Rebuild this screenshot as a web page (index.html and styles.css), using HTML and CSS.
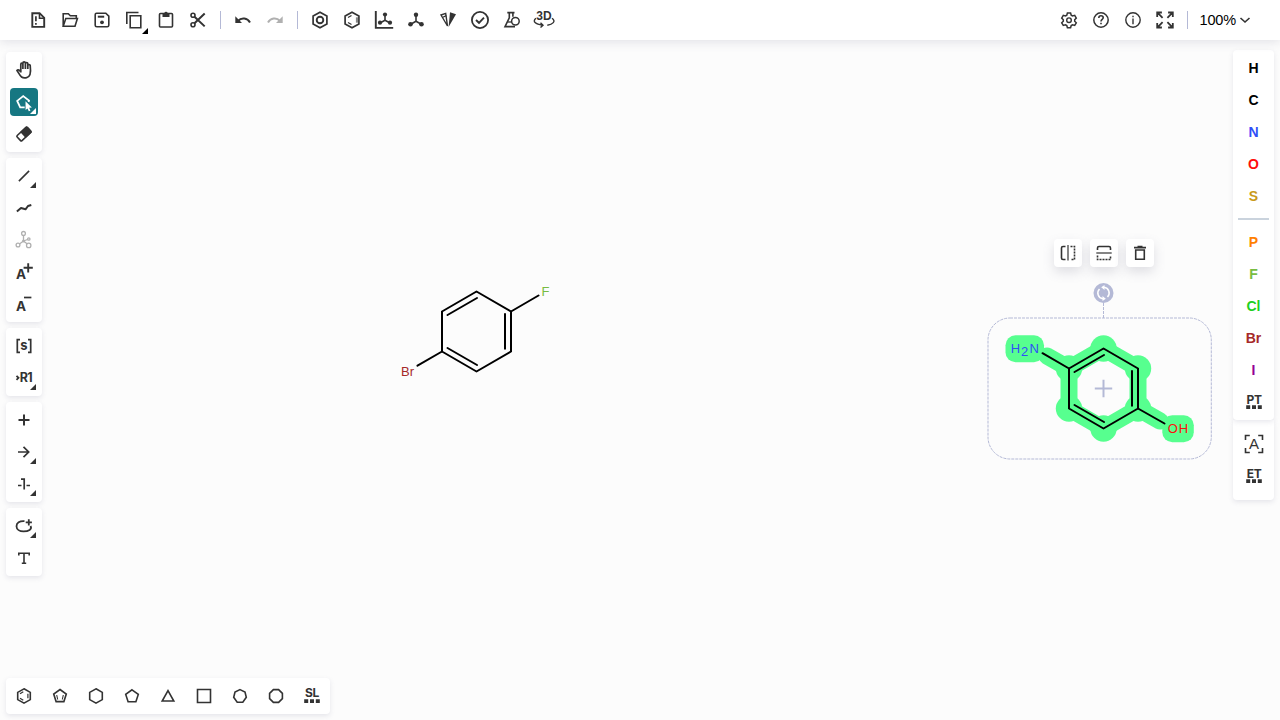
FILE: index.html
```
<!DOCTYPE html>
<html lang="en">
<head>
<meta charset="utf-8">
<title>Structure editor</title>
<link rel="stylesheet" href="styles.css">
</head>
<body>
<div class="app">
<header class="topbar">
  <button class="tb"><svg class="i" viewBox="0 0 24 24"><path d="M6.300 5.200h7.300l4.600 4.600v9.100H6.300z" stroke-width="1.900"/><path d="M13.500 5.500v4.700h4.500" stroke-width="1.600"/><path d="M9.900 8.200v5.100M9.900 15v1.800" stroke-width="1.700"/></svg></button>
  <button class="tb"><svg class="i" viewBox="0 0 24 24"><path d="M5.200 18V5.800h5.100l2 2h6v2.600M5.200 18.200l2.600-7.700h11.600L17 18.200z"/></svg></button>
  <button class="tb"><svg class="i" viewBox="0 0 24 24"><path d="M6.500 5.200h9.300l3 3v9q0 1.600-1.600 1.600H6.800q-1.600 0-1.600-1.600V6.700q0-1.500 1.300-1.500z"/><path d="M7.800 8.700h6.400" stroke-width="2"/><circle class="f" cx="12" cy="14.300" r="1.900"/></svg></button>
  <button class="tb more"><svg class="i" viewBox="0 0 24 24"><path d="M8.200 7.800h10.600v11.900H8.200z"/><path d="M4.800 16V4.500h11.700"/></svg></button>
  <button class="tb"><svg class="i" viewBox="0 0 24 24"><rect x="5.500" y="5.500" width="13" height="13.500" rx="1"/><path class="f" d="M8.500 5h1.800a1.800 1.800 0 0 1 3.400 0h1.800v4h-7z"/></svg></button>
  <button class="tb"><svg class="i" viewBox="0 0 24 24"><circle cx="7" cy="7.200" r="2"/><circle cx="7" cy="16.800" r="2"/><path d="M8.500 8.700l10.200 9.700M8.500 15.300l10.200-9.800" stroke-width="2"/></svg></button>
  <i class="sep"></i>
  <button class="tb"><svg class="i" viewBox="0 0 24 24"><path d="M7 13c3.500-4 9.500-3 12 1.500" stroke-width="2"/><path class="f" d="M4.300 8.200v6.900h6.700z"/></svg></button>
  <button class="tb off"><svg class="i" viewBox="0 0 24 24"><path d="M17 13C13.500 9 7.500 10 5 14.500" stroke-width="2"/><path class="f" d="M19.700 8.200v6.900H13z"/></svg></button>
  <i class="sep"></i>
  <button class="tb"><svg class="i" viewBox="0 0 24 24"><path d="M12 4.200l6.900 3.900v7.800L12 19.800l-6.900-3.900V8.100z" stroke-width="1.700"/><circle cx="12" cy="12" r="3.300" stroke-width="1.900"/></svg></button>
  <button class="tb"><svg class="i" viewBox="0 0 24 24"><path d="M12 4.200l6.900 3.900v7.800L12 19.800l-6.900-3.900V8.100z" stroke-width="1.700"/><path d="M8 9.500l3.500-2M8 14.500l3.500 2" stroke-width="1.200"/><path d="M17 9.300v5.400" stroke="#888" stroke-width="2.200"/></svg></button>
  <button class="tb"><svg class="i" viewBox="0 0 24 24"><path d="M3.800 3v16.900h17.400" stroke-width="1.900"/><path d="M13 7v5.300l-5 2.700m5-2.700l5 2.700"/><g class="f"><circle cx="13" cy="6.500" r="2.100"/><circle cx="8" cy="14.700" r="2.100"/><circle cx="18" cy="14.700" r="2.100"/></g></svg></button>
  <button class="tb"><svg class="i" viewBox="0 0 24 24"><path d="M12 6.800v6.400l-5.300 3m5.300-3l5.300 3"/><g class="f"><circle cx="12" cy="6.800" r="2.200"/><circle cx="6.500" cy="16.200" r="2.300"/><circle cx="17.500" cy="16.200" r="2.300"/></g></svg></button>
  <button class="tb"><svg class="i" viewBox="0 0 24 24"><path d="M9.700 5.400L5 7l6.500 11z" stroke-width="1.400"/><path d="M6.800 9.200l3.500-1.600" stroke-width="1.200"/><path class="f" d="M14 4.300l6 2L12.600 19z"/></svg></button>
  <button class="tb"><svg class="i" viewBox="0 0 24 24"><circle cx="12" cy="12" r="8.100" stroke-width="1.800"/><path d="M8 12l3 2.800 5-5.200" stroke-width="1.900"/></svg></button>
  <button class="tb"><svg class="i" viewBox="0 0 24 24"><path d="M7.300 4.600h7.200M9.300 4.800v5L5 18.600h10M12.900 4.800v4"/><circle cx="15.400" cy="13.200" r="3.800" stroke-width="1.500"/><path d="M7.800 14h3.500" stroke-width="1.300"/></svg></button>
  <button class="tb"><svg class="i" viewBox="0 0 24 24"><text class="t3d" x="12" y="12.200">3D</text><path d="M4 10.300c-4 3.200-.5 6 6.500 6.900M8.500 14.800l2.500 2.400-2.500 2.300M20 10.300c4.500 3.200.500 6-4.700 6.900" stroke-width="1.400"/></svg></button>
  <span class="grow"></span>
  <button class="tb"><svg class="i" viewBox="0 0 24 24"><path d="M10.400 5h3.200l.6 2.200 1.300.8 2.200-.6 1.600 2.700-1.600 1.600v1.500l1.600 1.600-1.600 2.600-2.200-.6-1.300.8-.6 2.100h-3.200l-.6-2.100-1.300-.8-2.200.6-1.600-2.600 1.600-1.600v-1.500l-1.600-1.600 1.600-2.700 2.200.6 1.300-.8z" stroke-width="1.500"/><circle cx="12" cy="12.200" r="2.300" stroke-width="1.400"/></svg></button>
  <button class="tb"><svg class="i" viewBox="0 0 24 24"><circle cx="12" cy="12" r="7.200" stroke-width="1.500"/><path d="M9.800 10q0-2.200 2.200-2.200t2.200 1.900c0 1.600-2.200 1.700-2.200 3.700M12 14.700v1.500"/></svg></button>
  <button class="tb"><svg class="i" viewBox="0 0 24 24"><circle cx="12" cy="12" r="7.200" stroke-width="1.400"/><path d="M12 7.800v1.500M12 10.500v5.700" stroke-width="1.400"/></svg></button>
  <button class="tb"><svg class="i" viewBox="0 0 24 24"><path d="M4.200 9V4.500h4.700M4.500 4.700L9.600 9.800M19.800 9V4.500h-4.700M19.500 4.700l-5.100 5.100M4.200 15v4.500h4.700M4.500 19.300l5.100-5.100M19.800 15v4.500h-4.700M19.500 19.300l-5.100-5.100" stroke-width="1.800"/></svg></button>
  <i class="sep"></i>
  <div class="zoom">100%<svg class="i chev" viewBox="0 0 12 12"><path d="M1.500 4L6 8l4.500-4"/></svg></div>
</header>

<main class="stage">
  <svg class="canvas" viewBox="0 40 1280 680">
    <defs>
      <g id="ring"><path d="M0-40l34.500 20v40L0 40l-34.500-20v-40z"/><path d="M-29-16.500L.5-33.500M28.500-17.500v34.800M-29 16.500L.5 33.500"/></g>
    </defs>
    <g class="bond"><use href="#ring" x="476.500" y="331.500"/><path d="M511 311.500l27.500-16M442 351.500l-24.500 14.200"/></g>
    <text class="lab" x="541.500" y="296" fill="#78bc42">F</text>
    <text class="lab" x="401" y="376" fill="#a62929">Br</text>

    <g class="glow">
      <path class="band" d="M1103.500 348.500l34.500 20v40l-34.500 20-34.500-20v-40zM1069 368.500l-22-12.500M1138 408.500l22 12.500"/>
      <circle cx="1103.500" cy="348.500" r="13.200"/><circle cx="1138" cy="368.500" r="13.200"/><circle cx="1138" cy="408.500" r="13.200"/><circle cx="1103.500" cy="428.500" r="13.200"/><circle cx="1069" cy="408.500" r="13.200"/><circle cx="1069" cy="368.500" r="13.200"/>
      <rect x="1005.500" y="335.300" width="38.500" height="26.900" rx="10"/><rect x="1162.300" y="415.300" width="31.500" height="26.900" rx="10"/>
    </g>
    <g class="bond"><use href="#ring" x="1103.500" y="388.500"/><path d="M1069 368.500l-26.500-15.300M1138 408.500l26.500 15"/></g>
    <text class="lab" x="1010.800" y="353" fill="#304ff7">H</text><text class="lab" x="1021" y="356" fill="#304ff7">2</text><text class="lab" x="1029.500" y="353" fill="#304ff7">N</text>
    <text class="lab" x="1167.800" y="433" fill="#ff0d0d">O</text><text class="lab" x="1178.800" y="433" fill="#ff0d0d">H</text>
    <g class="select">
      <rect x="988" y="318" width="223.300" height="141" rx="22"/>
      <path d="M1103.500 303v15"/>
      <path class="cross" d="M1103.500 379.800v17.400M1094.800 388.500h17.400"/>
      <circle class="knob" cx="1103.500" cy="293" r="10"/>
      <path class="spin" d="M1103 298.700a5.800 5.800 0 0 1-3.500-9.800M1104 287.300a5.800 5.800 0 0 1 3.500 9.800"/>
      <path class="tips" d="M1102.500 296l3.300 2.700-3.300 2.300zM1104.500 285l-3.300 2.300 3.300 2.700z"/>
    </g>
  </svg>

  <aside class="left">
    <section class="panel">
      <button class="btn"><svg class="i" viewBox="0 0 24 24"><path d="M8.800 14.500V6.400q0-1.200 1-1.200t1.100 1.200V11M10.900 11V5.200q0-1.300 1.200-1.300t1.300 1.300V11M13.400 11V5.700q0-1.200 1.200-1.200t1.200 1.200V11M15.800 11V7.700q0-1.200 1.200-1.200t1.200 1.200c.4 3 1.200 11-3.500 12-5.800 1.400-6.700-2.700-9.700-7.200 1-1.600 2.800-.3 3.800 1.500" stroke-width="1.700"/></svg></button>
      <button class="btn more on"><svg class="i" viewBox="0 0 24 24"><path d="M12.700 17.300H8.200L5.200 10.900l6-4.800 5.800 4.500-.4 1.500" stroke-width="1.800"/><path class="f" d="M13.500 11.300l6.400 6.200-2.700.2 1.200 3-1.600.6-1.300-2.900-1.900 1.700z"/></svg></button>
      <button class="btn"><svg class="i" viewBox="0 0 24 24"><g transform="rotate(-43 12 12)"><rect x="5" y="8.500" width="14" height="7" rx="1"/><path class="f" d="M10.500 8h8.500v8h-8.500z"/></g></svg></button>
    </section>
    <section class="panel">
      <button class="btn more"><svg class="i" viewBox="0 0 24 24"><path d="M6.900 17.100L17.100 6.900"/></svg></button>
      <button class="btn"><svg class="i" viewBox="0 0 24 24"><path d="M4.900 15.500L9 12l4.500 1.300L16 10l3.300-1" stroke-width="2" stroke-linejoin="round"/></svg></button>
      <button class="btn off"><svg class="i" viewBox="0 0 24 24"><g stroke-width="1.300"><circle cx="11.500" cy="5.400" r="1.900"/><circle cx="6" cy="17" r="1.900"/><circle cx="16.700" cy="17.400" r="2.200"/><circle cx="16.800" cy="11" r="1.200"/><path d="M11.500 7.200V13L7.800 15.800M11.500 13l3.500 2.700M11.500 13l4-1.500"/></g><circle class="f" cx="11.500" cy="13" r="1.500"/></svg></button>
      <button class="btn"><svg class="i" viewBox="0 0 24 24"><text class="ta" x="4" y="19">A</text><path d="M16.200 3.200v9.200M11.600 7.800h9.200" stroke-width="1.900"/></svg></button>
      <button class="btn"><svg class="i" viewBox="0 0 24 24"><text class="ta" x="4" y="19">A</text><path d="M12 5.500h7.400" stroke-width="1.700"/></svg></button>
    </section>
    <section class="panel">
      <button class="btn"><svg class="i" viewBox="0 0 24 24"><path d="M8 5.700H5.300v12.600H8M16 5.700h2.700v12.600H16" stroke-width="1.700"/><text class="ts" x="12" y="16.200">s</text></svg></button>
      <button class="btn more"><svg class="i" viewBox="0 0 24 24"><path d="M4.500 9.800l2 2-2 2" stroke-width="1.800"/><text class="tr" x="7.800" y="16.300">R1</text></svg></button>
    </section>
    <section class="panel">
      <button class="btn"><svg class="i" viewBox="0 0 24 24"><path d="M12 6.500v11M6.500 12h11" stroke-width="2"/></svg></button>
      <button class="btn more"><svg class="i" viewBox="0 0 24 24"><path d="M6 12h10.500M11.500 6.800l5.200 5.200-5.200 5.200" stroke-width="1.700"/></svg></button>
      <button class="btn more"><svg class="i" viewBox="0 0 24 24"><path d="M6 13.500h3.500M14.500 13.500H18M9 7.200h3.200v10.300" stroke-width="1.700"/></svg></button>
    </section>
    <section class="panel">
      <button class="btn more"><svg class="i" viewBox="0 0 24 24"><path d="M12.500 7.200C7.500 6.800 4.500 9 4.500 12.200s3.200 5.200 7 5.200c5 0 9-2 7-5.400M16.800 5.300v6.200M13.700 8.400h6.200" stroke-width="1.800"/></svg></button>
      <button class="btn"><svg class="i" viewBox="0 0 24 24"><path d="M6.800 9.500V7.200h10.400v2.300M12 7v10.300M9.800 17.300h4.400"/></svg></button>
    </section>
  </aside>

  <aside class="right">
    <section class="panel atoms">
      <button class="atom">H</button>
      <button class="atom">C</button>
      <button class="atom n">N</button>
      <button class="atom o">O</button>
      <button class="atom s">S</button>
      <i class="rule"></i>
      <button class="atom p">P</button>
      <button class="atom fl">F</button>
      <button class="atom cl">Cl</button>
      <button class="atom br">Br</button>
      <button class="atom io">I</button>
      <button class="atom"><svg class="i" viewBox="0 0 24 24"><text class="tt" x="12" y="13.500">PT</text><path class="f" d="M4.200 15.200h4v3.800h-4zM10 15.200h4V19h-4zM15.800 15.200h4V19h-4z"/></svg></button>
    </section>
    <section class="panel extra">
      <button class="atom"><svg class="i" viewBox="0 0 24 24"><path d="M3.500 8V3.500h4.300M16.200 3.500h4.300V8M20.500 16v4.500h-4.300M7.800 20.500H3.500V16"/><text class="tx" x="12" y="17">A</text></svg></button>
      <button class="atom"><svg class="i" viewBox="0 0 24 24"><text class="tt" x="12" y="13.500">ET</text><path class="f" d="M4.200 15.200h4v3.800h-4zM10 15.200h4V19h-4zM15.800 15.200h4V19h-4z"/></svg></button>
    </section>
  </aside>

  <div class="floating">
    <button class="btn"><svg class="i" viewBox="0 0 24 24"><path d="M9.500 5.500H7q-1.500 0-1.500 1.500v10q0 1.500 1.500 1.500h2.500"/><path d="M12 4v15.500" stroke="#666"/><path d="M14.500 5.500h4v13h-4" stroke-dasharray="2 1"/></svg></button>
    <button class="btn"><svg class="i" viewBox="0 0 24 24"><path d="M5.500 9V7q0-1.500 1.500-1.500h10q1.500 0 1.500 1.500v2"/><path d="M4.300 12h15.400" stroke="#666"/><path d="M5.500 14.500v4h13v-4" stroke-dasharray="2 1"/></svg></button>
    <button class="btn"><svg class="i" viewBox="0 0 24 24"><path d="M6 6.600h12M9.500 5.600h5M7.700 9h8.600v9.300H7.700z"/></svg></button>
  </div>

  <footer class="panel bottom">
    <button class="btn"><svg class="i" viewBox="0 0 24 24"><path d="M12 4.800l6.300 3.600v7.200L12 19.200l-6.300-3.600V8.400z"/><path d="M8 9.700l3.300-2M8 14.300l3.300 2M15.900 9.700v4.600" stroke-width="1.200"/></svg></button>
    <button class="btn"><svg class="i" viewBox="0 0 24 24"><path d="M12 5.500l6.300 4.600-2.400 7.500H8.100l-2.400-7.500z"/><path d="M8.700 11l1 4.500M15.300 11l-1 4.500" stroke-width="1.100"/></svg></button>
    <button class="btn"><svg class="i" viewBox="0 0 24 24"><path d="M12 4.800l6.300 3.600v7.200L12 19.200l-6.300-3.600V8.400z"/></svg></button>
    <button class="btn"><svg class="i" viewBox="0 0 24 24"><path d="M12 5.800l6.300 4.600-2.400 7.400H8.100l-2.400-7.400z"/></svg></button>
    <button class="btn"><svg class="i" viewBox="0 0 24 24"><path d="M12 6.700l5.800 10.300H6.200z"/></svg></button>
    <button class="btn"><svg class="i" viewBox="0 0 24 24"><path d="M5.500 5.500h13v13h-13z"/></svg></button>
    <button class="btn"><svg class="i" viewBox="0 0 24 24"><path d="M12 5.600l5 2.400 1.300 5.300-3.500 4.900H9.200l-3.500-4.900L7 8z"/></svg></button>
    <button class="btn"><svg class="i" viewBox="0 0 24 24"><path d="M9.400 5.600h5.200l3.800 3.800v5.200l-3.800 3.800H9.400l-3.800-3.800V9.400z"/></svg></button>
    <button class="btn"><svg class="i" viewBox="0 0 24 24"><text class="tt" x="12" y="13.300">SL</text><path class="f" d="M4.200 15.200h4v3.800h-4zM10 15.200h4V19h-4zM15.800 15.200h4V19h-4z"/></svg></button>
  </footer>
</main>
</div>
</body>
</html>
```
FILE: styles.css
```
* { box-sizing: border-box; }
body { margin: 0; background: #fcfcfc; font-family: "Liberation Sans", Arial, sans-serif; overflow: hidden; }
.app { height: 720px; display: flex; flex-direction: column; }
button { border: 0; padding: 0; margin: 0; background: transparent; font: inherit; color: #333; display: flex; align-items: center; justify-content: center; position: relative; flex: none; }
.i { width: 24px; height: 24px; flex: none; fill: none; stroke: currentColor; stroke-width: 1.6; overflow: visible; display: block; }
.f { fill: currentColor; stroke: none; }
.i text { fill: currentColor; stroke: none; font-family: Inter, "Liberation Sans", sans-serif; font-weight: 700; }
.off { color: #b0b0b0; }
.topbar { height: 40px; flex: none; display: flex; align-items: center; padding: 0 22px; background: #fff; box-shadow: 0 2px 10px rgba(103, 104, 132, .18); position: relative; z-index: 2; color: #333; }
.tb { width: 32px; height: 40px; }
.sep { width: 1px; height: 18px; background: #b4b9d6; margin: 0 6px; }
.grow { flex: 1; }
.zoom { width: 58px; margin: 0 0 0 6px; display: flex; align-items: center; font-size: 14.5px; color: #000; white-space: nowrap; gap: 3px; letter-spacing: -.15px; text-indent: -.5px; }
.chev { width: 12px; height: 12px; color: #333; }
.more::after { content: ""; position: absolute; right: 2px; bottom: 2px; width: 6px; height: 6px; background: currentColor; clip-path: polygon(100% 0, 100% 100%, 0 100%); }
.tb.more::after { bottom: 6px; background: #000; }
.stage { flex: 1; min-height: 0; position: relative; display: grid; grid-template-columns: 36px 41px; justify-content: space-between; align-content: space-between; align-items: start; padding: 10px 6px 6px; }
.left { display: flex; flex-direction: column; gap: 6px; padding-top: 2px; position: relative; }
.panel { background: #fff; border-radius: 4px; padding: 4px; display: flex; flex-direction: column; gap: 4px; box-shadow: 0 2px 5px rgba(103, 104, 132, .15); }
.btn { width: 28px; height: 28px; border-radius: 4px; }
.on { background: #167782; color: #fff; }
.right { width: 41px; display: flex; flex-direction: column; position: relative; }
.atoms { align-items: center; height: 370px; position: relative; z-index: 1; }
.extra { align-items: center; height: 80px; padding-top: 10px; border-radius: 0 0 4px 4px; }
.atom { width: 32px; height: 28px; font-size: 14px; font-weight: 700; color: #333; }
.atoms .atom { color: #000; }
.atoms .atom .i { color: #333; }
.atoms .n { color: #304ff7; }
.atoms .o { color: #ff0d0d; }
.atoms .s { color: #c99a19; }
.atoms .p { color: #ff8000; }
.atoms .fl { color: #78bc42; }
.atoms .cl { color: #1fd01f; }
.atoms .br { color: #a62929; }
.atoms .io { color: #940094; }
.rule { width: 31px; height: 2px; margin: 4px 0; background: #cad3dd; }
.bottom { grid-column: 1 / -1; width: 324px; height: 36px; flex-direction: row; gap: 8px; position: relative; }
.canvas { position: absolute; inset: 0; width: 1280px; height: 680px; pointer-events: none; }
.bond { fill: none; stroke: #000; stroke-width: 2; stroke-linecap: round; stroke-linejoin: round; }
.lab { font-size: 13px; }
.glow { fill: #57ff8f; }
.band { fill: none; stroke: #57ff8f; stroke-width: 17; stroke-linecap: round; }
.select { fill: none; stroke: #b4b9d6; stroke-dasharray: 3 1; }
.select .cross { stroke-width: 2; stroke-dasharray: none; }
.select .knob { fill: #b4b9d6; stroke: none; }
.select .spin { stroke: #fff; stroke-width: 1.5; stroke-dasharray: none; }
.select .tips { fill: #fff; stroke: none; }
.floating { position: absolute; left: 1054px; top: 199px; display: flex; gap: 8px; }
.floating .btn { background: #fff; box-shadow: 0 5px 12px rgba(103, 104, 132, .2); }
.i .t3d { font: 700 12px "Liberation Sans", sans-serif; text-anchor: middle; }
.i .ta { font-size: 13.5px; }
.i .ts { font-size: 13px; text-anchor: middle; }
.i .tr { font-size: 12.5px; letter-spacing: -.8px; }
.i .tt { font-size: 12px; text-anchor: middle; letter-spacing: -.3px; }
.i .tx { font: 400 15px "Liberation Sans", sans-serif; text-anchor: middle; }
```
